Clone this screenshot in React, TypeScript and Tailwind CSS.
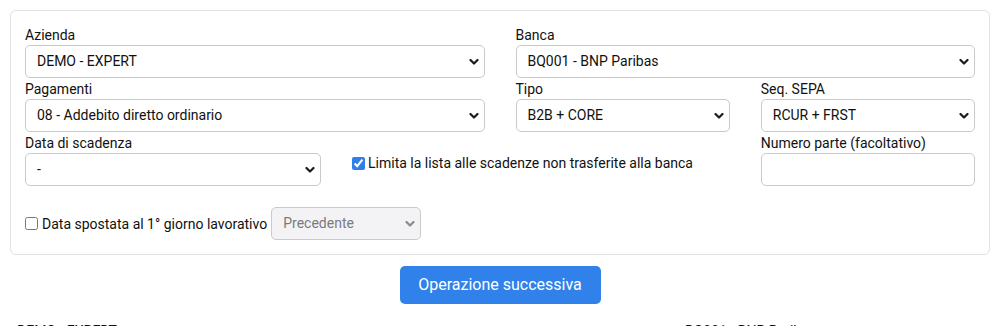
import React from "react";

type SelectProps = {
  value: string;
  disabled?: boolean;
  className?: string;
};

function Chevron({ disabled }: { disabled?: boolean }) {
  return (
    <svg
      className="pointer-events-none absolute right-[6px] top-1/2 -translate-y-1/2"
      width="10"
      height="7"
      viewBox="0 0 10 7"
      fill="none"
    >
      <path
        d="M1.5 1.5 L5 5 L8.5 1.5"
        stroke={disabled ? "#8a8a8e" : "#1b1b1b"}
        strokeWidth="2.2"
        strokeLinecap="round"
        strokeLinejoin="round"
      />
    </svg>
  );
}

function Select({ value, disabled, className }: SelectProps) {
  return (
    <div className={"relative " + (className ?? "w-full")}>
      <select
        disabled={disabled}
        defaultValue={value}
        className={
          "h-[33px] w-full appearance-none rounded-[5px] border border-[#c9c9ce] pl-[11px] pr-6 text-[14px] outline-none " +
          (disabled ? "bg-[#f3f3f5] text-[#7a7a7e]" : "bg-white text-[#111]")
        }
      >
        <option value={value}>{value}</option>
      </select>
      <Chevron disabled={disabled} />
    </div>
  );
}

function Field({ label, children }: { label: string; children: React.ReactNode }) {
  return (
    <div className="flex flex-col">
      <label className="h-[21px] pt-[1px] text-[14px] leading-[20px] text-[#111]">{label}</label>
      {children}
    </div>
  );
}

export default function App() {
  return (
    <div className="h-[326px] overflow-hidden bg-white font-['Roboto','Liberation_Sans',sans-serif] text-[#111]">
      <div className="mx-[10px] mt-[10px] rounded-[6px] border border-[#e2e2e4] px-[14px] pt-[13px] pb-[14px]">
        <div className="grid grid-cols-12 gap-x-[31px]">
          <div className="col-span-6">
            <Field label="Azienda">
              <Select value="DEMO - EXPERT" />
            </Field>
          </div>
          <div className="col-span-6">
            <Field label="Banca">
              <Select value="BQ001 - BNP Paribas" />
            </Field>
          </div>

          <div className="col-span-6">
            <Field label="Pagamenti">
              <Select value="08 - Addebito diretto ordinario" />
            </Field>
          </div>
          <div className="col-span-3">
            <Field label="Tipo">
              <Select value="B2B + CORE" />
            </Field>
          </div>
          <div className="col-span-3">
            <Field label="Seq. SEPA">
              <Select value="RCUR + FRST" />
            </Field>
          </div>

          <div className="col-span-4">
            <Field label="Data di scadenza">
              <Select value="-" />
            </Field>
          </div>
          <div className="col-span-5 pt-[21px]">
            <label className="flex h-[20px] items-center gap-[3px] text-[14px] leading-[20px]">
              <input
                type="checkbox"
                defaultChecked
                className="m-0 h-[13px] w-[13px] accent-[#2f7fe8]"
              />
              <span>Limita la lista alle scadenze non trasferite alla banca</span>
            </label>
          </div>
          <div className="col-span-3">
            <Field label="Numero parte (facoltativo)">
              <input
                type="text"
                className="h-[33px] w-full rounded-[5px] border border-[#c9c9ce] bg-white px-[11px] text-[14px] outline-none"
              />
            </Field>
          </div>

          <div className="col-span-12 mt-[21px] flex items-center">
            <input
              type="checkbox"
              className="m-0 h-[13px] w-[13px] accent-[#2f7fe8]"
            />
            <span className="ml-[4px] text-[14px] leading-[20px]">
              Data spostata al 1° giorno lavorativo
            </span>
            <Select value="Precedente" disabled className="ml-[4px] w-[150px]" />
          </div>
        </div>
      </div>

      <div className="mt-[11px] flex justify-center">
        <button className="h-[38px] w-[201px] rounded-[5px] bg-[#3082ea] text-[16px] text-white">
          Operazione successiva
        </button>
      </div>

      {/* table below the fold, only the top of the first row shows */}
      <div className="mt-[17px] flex text-[14px] leading-[20px]">
        <div className="w-[685px] pl-[17px]">DEMO - EXPERT</div>
        <div>BQ001 - BNP Paribas</div>
      </div>
    </div>
  );
}
